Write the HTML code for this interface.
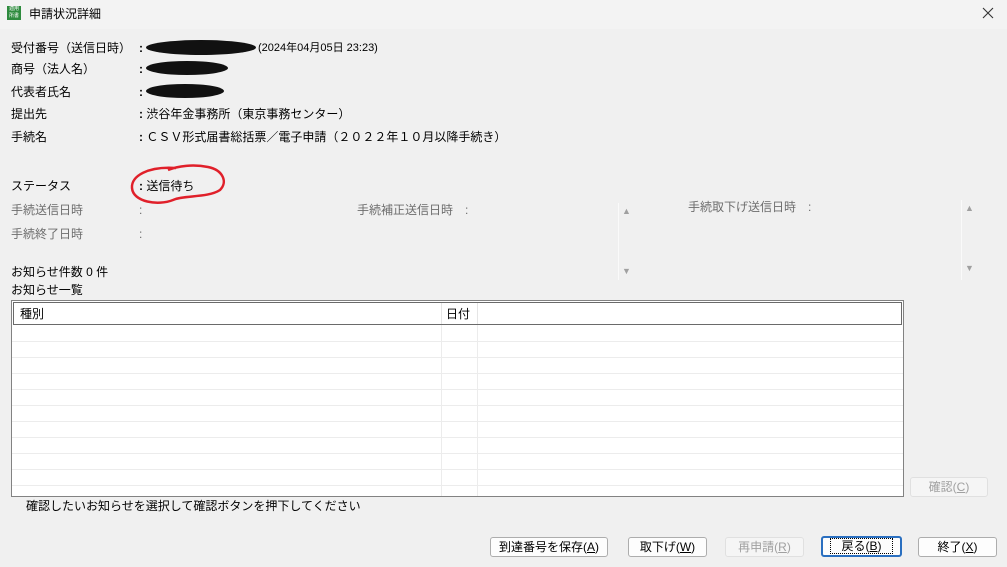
<!DOCTYPE html>
<html><head><meta charset="utf-8"><style>
body{margin:0;width:1007px;height:567px;background:#f0f0f0;font-family:"Liberation Sans","Noto Sans CJK JP",sans-serif;font-size:12px;color:#000;position:relative;overflow:hidden}
.a{position:absolute;white-space:nowrap;line-height:14px}
.g{color:#6d6d6d}
b{font-weight:bold}
.btn{position:absolute;height:18px;border:1px solid #adadad;border-radius:3px;background:#fdfdfd;text-align:center;line-height:18px;font-size:12px}
.blob{position:absolute;background:#111;border-radius:50%}
.tri{position:absolute;font-size:9px;color:#a0a0a0}
</style></head><body>
<div style="position:absolute;left:0;top:0;width:1007px;height:29px;background:#f3f3f3"></div>
<div style="position:absolute;left:7px;top:6px;width:14px;height:14px;background:#2e8b3e;color:#fff;font-size:5px;line-height:7px;text-align:center">適用<br>所書</div>
<div class="a" style="left:29px;top:7px">申請状況詳細</div>
<svg style="position:absolute;left:982px;top:7px" width="12" height="12"><path d="M1 1 L11 11 M11 1 L1 11" stroke="#333" stroke-width="1.1"/></svg>

<div class="a" style="left:11px;top:41px">受付番号（送信日時）</div>
<div class="a" style="left:139px;top:41px"><b>:</b></div>
<div class="blob" style="left:146px;top:40px;width:110px;height:15px"></div>
<div class="a" style="left:258px;top:41px;font-size:11px">(2024年04月05日 23:23)</div>
<div class="a" style="left:11px;top:62px">商号（法人名）</div>
<div class="a" style="left:139px;top:62px"><b>:</b></div>
<div class="blob" style="left:146px;top:61px;width:82px;height:14px"></div>
<div class="a" style="left:11px;top:85px">代表者氏名</div>
<div class="a" style="left:139px;top:85px"><b>:</b></div>
<div class="blob" style="left:146px;top:84px;width:78px;height:14px"></div>
<div class="a" style="left:11px;top:107px">提出先</div>
<div class="a" style="left:139px;top:107px"><b>:</b> 渋谷年金事務所（東京事務センター）</div>
<div class="a" style="left:11px;top:130px">手続名</div>
<div class="a" style="left:139px;top:130px"><b>:</b> ＣＳＶ形式届書総括票／電子申請（２０２２年１０月以降手続き）</div>

<div class="a" style="left:11px;top:179px">ステータス</div>
<div class="a" style="left:139px;top:179px"><b>:</b> 送信待ち</div>
<svg style="position:absolute;left:128px;top:162px" width="100" height="48"><path d="M48 6 C20 4 3 14 4 26 C5 40 30 44 45 38 C55 33 80 36 92 28 C100 20 95 8 80 5 C65 2 50 4 40 8" fill="none" stroke="#e0202a" stroke-width="2.5"/></svg>
<div class="a g" style="left:11px;top:203px">手続送信日時</div>
<div class="a g" style="left:139px;top:203px">:</div>
<div class="a g" style="left:11px;top:227px">手続終了日時</div>
<div class="a g" style="left:139px;top:227px">:</div>
<div class="a g" style="left:357px;top:203px">手続補正送信日時　:</div>
<div class="a g" style="left:688px;top:200px">手続取下げ送信日時　:</div>
<div style="position:absolute;left:618px;top:203px;width:1px;height:77px;background:#fafafa"></div>
<div style="position:absolute;left:961px;top:200px;width:1px;height:80px;background:#fafafa"></div>
<div class="tri" style="left:622px;top:206px">▲</div>
<div class="tri" style="left:622px;top:266px">▼</div>
<div class="tri" style="left:965px;top:203px">▲</div>
<div class="tri" style="left:965px;top:263px">▼</div>

<div class="a" style="left:11px;top:265px">お知らせ件数 0 件</div>
<div class="a" style="left:11px;top:283px">お知らせ一覧</div>

<div style="position:absolute;left:11px;top:300px;width:891px;height:195px;border:1px solid #828282;background:#fff;
background-image:repeating-linear-gradient(to bottom,transparent 0,transparent 15px,#ececec 15px,#ececec 16px);background-position:0 25px;background-repeat:repeat"></div>
<div style="position:absolute;left:12px;top:301px;width:891px;height:24px;background:#fff"></div>
<div style="position:absolute;left:441px;top:325px;width:1px;height:171px;background:#ececec"></div>
<div style="position:absolute;left:477px;top:325px;width:1px;height:171px;background:#ececec"></div>
<div style="position:absolute;left:13px;top:302px;width:887px;height:21px;border:1px solid #6a6a6a;background:#fff"></div>
<div style="position:absolute;left:441px;top:303px;width:1px;height:21px;background:#e5e5e5"></div>
<div style="position:absolute;left:477px;top:303px;width:1px;height:21px;background:#e5e5e5"></div>
<div class="a" style="left:20px;top:307px">種別</div>
<div class="a" style="left:446px;top:307px">日付</div>

<div class="btn" style="left:910px;top:477px;width:76px;color:#a0a0a0;border-color:#e0e0e0;background:#f5f5f5">確認(<u>C</u>)</div>
<div class="a" style="left:26px;top:499px">確認したいお知らせを選択して確認ボタンを押下してください</div>

<div class="btn" style="left:490px;top:537px;width:116px">到達番号を保存(<u>A</u>)</div>
<div class="btn" style="left:628px;top:537px;width:77px">取下げ(<u>W</u>)</div>
<div class="btn" style="left:725px;top:537px;width:77px;color:#a0a0a0;border-color:#e0e0e0;background:#f5f5f5">再申請(<u>R</u>)</div>
<div class="btn" style="left:821px;top:536px;width:77px;border:2px solid #2a6fc0;height:17px;line-height:17px"><span style="outline:1px dotted #000;padding:0 10px">戻る(<u>B</u>)</span></div>
<div class="btn" style="left:918px;top:537px;width:77px">終了(<u>X</u>)</div>
</body></html>
